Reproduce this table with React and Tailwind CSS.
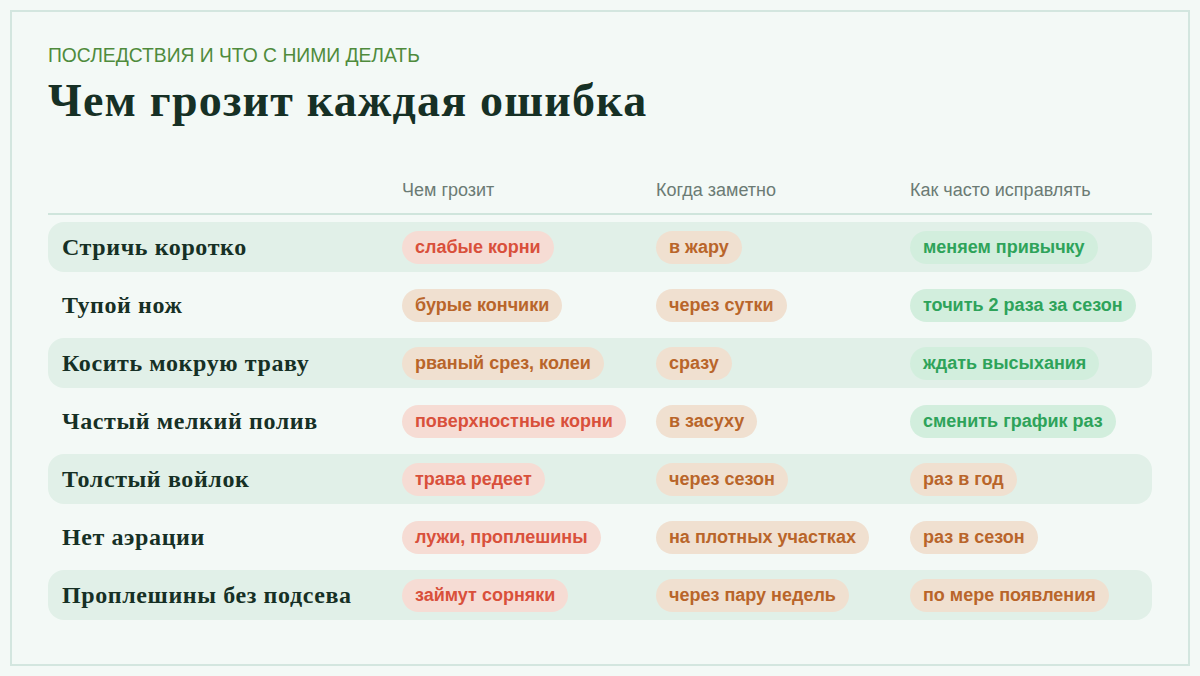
import React from "react";

const rows = [
  { name: "Стричь коротко", risk: "слабые корни", when: "в жару", fix: "меняем привычку", fixTone: "green" },
  { name: "Тупой нож", risk: "бурые кончики", riskTone: "brown", when: "через сутки", fix: "точить 2 раза за сезон", fixTone: "green" },
  { name: "Косить мокрую траву", risk: "рваный срез, колеи", riskTone: "brown", when: "сразу", fix: "ждать высыхания", fixTone: "green" },
  { name: "Частый мелкий полив", risk: "поверхностные корни", when: "в засуху", fix: "сменить график раз", fixTone: "green" },
  { name: "Толстый войлок", risk: "трава редеет", when: "через сезон", fix: "раз в год", fixTone: "brown" },
  { name: "Нет аэрации", risk: "лужи, проплешины", when: "на плотных участках", fix: "раз в сезон", fixTone: "brown" },
  { name: "Проплешины без подсева", risk: "займут сорняки", when: "через пару недель", fix: "по мере появления", fixTone: "brown" },
];

const tones = {
  red: "bg-[#f6dcd4] text-[#d9503b]",
  brown: "bg-[#f0e0d0] text-[#b9652a]",
  green: "bg-[#d2eedd] text-[#2ea35a]",
};

const sans = { fontFamily: "'Liberation Sans', Arial, sans-serif" };
const serif = { fontFamily: "'Liberation Serif', 'Times New Roman', serif" };

function Pill({ tone = "red", children }) {
  return (
    <span
      className={`inline-flex h-[33px] items-center rounded-full px-[13px] text-[18px] font-bold ${tones[tone]}`}
      style={sans}
    >
      {children}
    </span>
  );
}

export default function App() {
  return (
    <div className="h-[676px] w-[1200px] bg-[#f3f9f6] p-[10px]">
      <div className="h-[656px] border-2 border-[#d3e6df] px-[36px] pt-[32px]">
        {/* header */}
        <p className="text-[19.3px] leading-[24px] text-[#4f8b3c]" style={sans}>
          ПОСЛЕДСТВИЯ И ЧТО С НИМИ ДЕЛАТЬ
        </p>
        <h1
          className="mt-[8px] text-[46px] font-bold leading-[50px] tracking-[1.2px] text-[#163025]"
          style={serif}
        >
          Чем грозит каждая ошибка
        </h1>

        {/* table */}
        <div className="mt-[53px] w-[1104px]">
          <div
            className="grid grid-cols-[354px_254px_254px_1fr] border-b-2 border-[#cfe5dc] pb-[12px] text-[18px] leading-[22px] text-[#6b7b74]"
            style={sans}
          >
            <div />
            <div>Чем грозит</div>
            <div>Когда заметно</div>
            <div>Как часто исправлять</div>
          </div>

          <div className="mt-[7px] flex flex-col gap-2">
            {rows.map((r, i) => (
              <div
                key={r.name}
                className={`grid h-[50px] grid-cols-[354px_254px_254px_1fr] items-center rounded-2xl ${
                  i % 2 === 0 ? "bg-[#e1f0e8]" : ""
                }`}
              >
                <div
                  className="pl-[14px] text-[24px] font-bold leading-[28px] tracking-[0.6px] text-[#163025]"
                  style={serif}
                >
                  {r.name}
                </div>
                <div>
                  <Pill tone={r.riskTone || "red"}>{r.risk}</Pill>
                </div>
                <div>
                  <Pill tone="brown">{r.when}</Pill>
                </div>
                <div>
                  <Pill tone={r.fixTone}>{r.fix}</Pill>
                </div>
              </div>
            ))}
          </div>
        </div>
      </div>
    </div>
  );
}
